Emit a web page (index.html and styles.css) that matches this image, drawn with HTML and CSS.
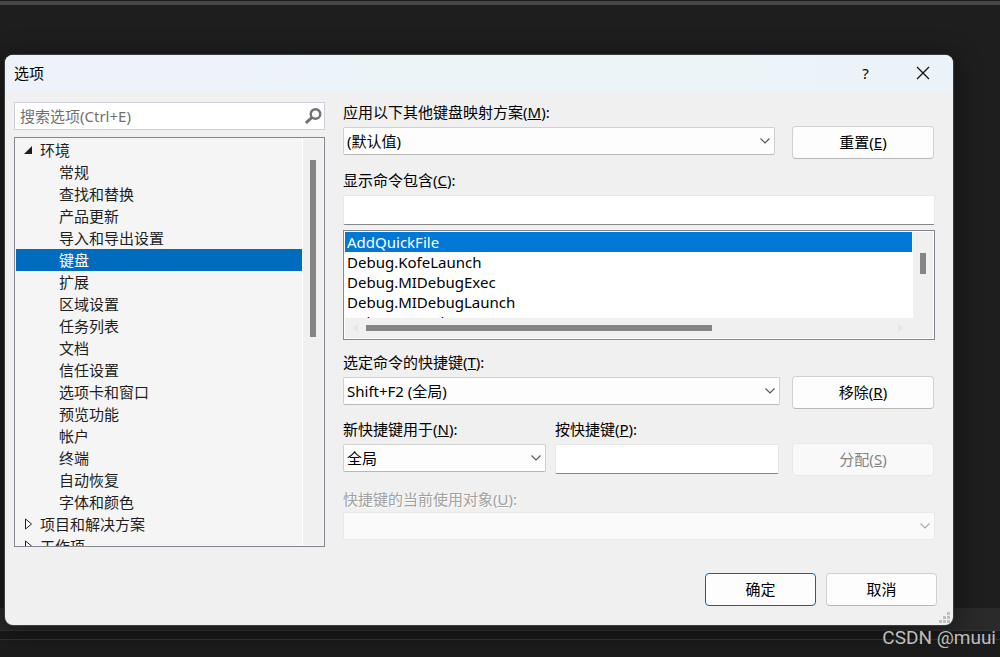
FILE: index.html
```html
<!DOCTYPE html>
<html lang="zh-CN">
<head>
    <meta charset="UTF-8">
    <meta name="viewport" content="width=device-width, initial-scale=1.0">
    <title>选项</title>
    <link rel="stylesheet" href="styles.css">
</head>
<body>
    <div class="dialog" role="dialog" aria-labelledby="dialogTitle">
        <header class="title-bar">
            <h1 id="dialogTitle">选项</h1>
            <button class="title-button" type="button" aria-label="帮助">?</button>
            <button class="title-button" type="button" aria-label="关闭">
                <svg width="14" height="14" viewBox="0 0 14 14"><path d="M1 1L13 13M13 1L1 13" fill="none" stroke="#111" stroke-width="1.3"/></svg>
            </button>
        </header>

        <form class="content">
            <div class="sidebar">
                <div class="search">
                    <input type="text" id="search" placeholder="搜索选项(Ctrl+E)" aria-label="搜索选项">
                    <svg width="18" height="18" viewBox="0 0 18 18"><circle cx="11.5" cy="7" r="4.8" fill="none" stroke="#717171" stroke-width="2.4"/><path d="M8 10.4L1.8 16" stroke="#717171" stroke-width="3"/></svg>
                </div>
                <div class="tree">
                    <ul class="tree-list">
                        <li class="parent"><svg width="10" height="10" viewBox="0 0 10 10"><path d="M9 1V9H1Z" fill="#1e1e1e"/></svg>环境</li>
                        <li>常规</li>
                        <li>查找和替换</li>
                        <li>产品更新</li>
                        <li>导入和导出设置</li>
                        <li class="selected">键盘</li>
                        <li>扩展</li>
                        <li>区域设置</li>
                        <li>任务列表</li>
                        <li>文档</li>
                        <li>信任设置</li>
                        <li>选项卡和窗口</li>
                        <li>预览功能</li>
                        <li>帐户</li>
                        <li>终端</li>
                        <li>自动恢复</li>
                        <li>字体和颜色</li>
                        <li class="parent"><svg width="10" height="12" viewBox="0 0 10 12"><path d="M2.5 1V11L8.5 6Z" fill="#fff" stroke="#1e1e1e"/></svg>项目和解决方案</li>
                        <li class="parent"><svg width="10" height="12" viewBox="0 0 10 12"><path d="M2.5 1V11L8.5 6Z" fill="#fff" stroke="#1e1e1e"/></svg>工作项</li>
                    </ul>
                    <div class="tree-scroll"><span class="thumb"></span></div>
                </div>
            </div>

            <div class="settings">
                <label for="scheme">应用以下其他键盘映射方案(<u>M</u>):</label>
                <div class="row">
                    <div class="dropdown scheme">
                        <select id="scheme"><option>(默认值)</option></select>
                        <svg width="10" height="6" viewBox="0 0 10 6"><path d="M.5 .5L5 5L9.5 .5" fill="none" stroke="#555" stroke-width="1.1"/></svg>
                    </div>
                    <button class="btn" type="button">重置(<u>E</u>)</button>
                </div>

                <label for="filter">显示命令包含(<u>C</u>):</label>
                <input class="text-box" type="text" id="filter">

                <div class="commands">
                    <ul class="command-list">
                        <li class="selected">AddQuickFile</li>
                        <li>Debug.KofeLaunch</li>
                        <li>Debug.MIDebugExec</li>
                        <li>Debug.MIDebugLaunch</li>
                        <li>Debug.Snapshot</li>
                    </ul>
                    <div class="scroll-y"><span class="thumb"></span></div>
                    <div class="scroll-x">
                        <svg width="8" height="10" viewBox="0 0 8 10"><path d="M7 1V9L1 5Z" fill="#e6e6e6"/></svg>
                        <div class="track"><span class="thumb"></span></div>
                        <svg width="8" height="10" viewBox="0 0 8 10"><path d="M1 1V9L7 5Z" fill="#e6e6e6"/></svg>
                    </div>
                </div>

                <label for="shortcut">选定命令的快捷键(<u>T</u>):</label>
                <div class="row">
                    <div class="dropdown">
                        <select id="shortcut"><option>Shift+F2 (全局)</option></select>
                        <svg width="10" height="6" viewBox="0 0 10 6"><path d="M.5 .5L5 5L9.5 .5" fill="none" stroke="#555" stroke-width="1.1"/></svg>
                    </div>
                    <button class="btn" type="button">移除(<u>R</u>)</button>
                </div>

                <div class="row assign">
                    <div class="field scope">
                        <label for="scope">新快捷键用于(<u>N</u>):</label>
                        <div class="dropdown">
                            <select id="scope"><option>全局</option></select>
                            <svg width="10" height="6" viewBox="0 0 10 6"><path d="M.5 .5L5 5L9.5 .5" fill="none" stroke="#555" stroke-width="1.1"/></svg>
                        </div>
                    </div>
                    <div class="field">
                        <label for="press">按快捷键(<u>P</u>):</label>
                        <input class="text-box" type="text" id="press">
                    </div>
                    <button class="btn" type="button" disabled>分配(<u>S</u>)</button>
                </div>

                <label class="disabled" for="usedBy">快捷键的当前使用对象(<u>U</u>):</label>
                <div class="dropdown">
                    <select id="usedBy" disabled><option></option></select>
                    <svg width="10" height="6" viewBox="0 0 10 6"><path d="M.5 .5L5 5L9.5 .5" fill="none" stroke="#aaa" stroke-width="1.1"/></svg>
                </div>
            </div>
        </form>

        <footer class="footer">
            <button class="btn primary" type="button">确定</button>
            <button class="btn" type="button">取消</button>
        </footer>
        <svg class="grip" width="12" height="12" viewBox="0 0 12 12"><path d="M8 0h3v3H8zM4 4h3v3H4zM8 4h3v3H8zM0 8h3v3H0zM4 8h3v3H4zM8 8h3v3H8z" fill="#bfbfbf"/></svg>
    </div>
    <div class="watermark">CSDN @muui</div>
</body>
</html>
```
FILE: styles.css
```css
* {
    box-sizing: border-box;
}
body {
    margin: 0;
    min-height: 100vh;
    padding: 55px 47px 32px 5px;
    position: relative;
    overflow: hidden;
    font: 15px/20px "Noto Sans", "Noto Sans CJK SC", sans-serif;
    color: #000;
    background:
        linear-gradient(#464646, #464646) 0 1px / 100% 4px no-repeat,
        linear-gradient(#2a2a2a 22px, #333 22px, #333 23px, #1a1a1a 23px, #1a1a1a 31px, #333 31px, #333 32px, #1c1c1c 32px) 0 100% / 100% 49px no-repeat,
        #1e1e1e;
}
ul {
    list-style: none;
    margin: 0;
    padding: 0;
}
svg {
    display: block;
    flex: none;
}
input, select, button {
    font: inherit;
    color: inherit;
    margin: 0;
}
.dialog {
    position: relative;
    background: #f0f0f0;
    border-radius: 8px;
    box-shadow: 0 0 0 1px #3c3c3c, 0 4px 24px 4px rgba(0, 0, 0, 0.4);
    overflow: hidden;
}
.title-bar {
    display: flex;
    align-items: center;
    height: 37px;
    padding: 0 2px 2px 9px;
    background: linear-gradient(100deg, #eef3fb 25%, #ebf4f7 40%, #ebf4f7 70%, #ebf3fa);
}
.title-bar h1 {
    flex: 1;
    margin: 0;
    font-size: 15px;
    line-height: 20px;
    font-weight: normal;
}
.title-button {
    display: flex;
    align-items: center;
    justify-content: center;
    width: 57px;
    height: 34px;
    padding: 0;
    border: none;
    background: none;
}
.content {
    display: flex;
    gap: 18px;
    padding: 10px 18px 0 9px;
}
.sidebar {
    flex: 0 0 311px;
}
.search {
    display: flex;
    align-items: center;
    height: 28px;
    padding-right: 2px;
    background: #fff;
    border: 1px solid #ccceDB;
}
.search input {
    flex: 1;
    min-width: 0;
    padding: 0 5px;
    border: none;
    outline: none;
    background: none;
}
.search input::placeholder {
    color: #717171;
}
.tree {
    display: flex;
    height: 410px;
    margin-top: 7px;
    padding: 1px;
    background: #f5f5f5;
    border: 1px solid #828790;
    overflow: hidden;
}
.tree-list {
    flex: 1;
    color: #1e1e1e;
}
.tree-list li {
    display: flex;
    align-items: center;
    height: 22px;
    padding-left: 43px;
}
.tree-list .parent {
    gap: 7px;
    padding-left: 7px;
}
.tree-list .selected {
    background: #006cbe;
    color: #fff;
}
.tree-scroll {
    width: 21px;
    padding: 21px 7px 0;
    background: #f0f0f0;
    border-left: 1px solid #fff;
}
.thumb {
    display: block;
    background: #858585;
}
.tree-scroll .thumb {
    height: 177px;
}
.settings {
    flex: 1;
    min-width: 0;
}
label {
    display: block;
    margin-bottom: 5px;
}
.row {
    display: flex;
    align-items: flex-start;
    gap: 12px;
    margin-bottom: 11px;
    padding-right: 1px;
}
.dropdown {
    position: relative;
    flex: 1;
}
.dropdown.scheme {
    margin-right: 5px;
}
.dropdown select {
    appearance: none;
    display: block;
    width: 100%;
    height: 28px;
    padding: 0 24px 0 3px;
    background: #fdfdfd;
    border: 1px solid #d0d0d0;
    border-bottom-color: #b8b8b8;
    border-radius: 2px;
}
.dropdown select:disabled {
    background: #fafafa;
    border-color: #e8e8e8;
    opacity: 1;
}
.dropdown svg {
    position: absolute;
    right: 5px;
    top: 11px;
}
.btn {
    width: 142px;
    height: 33px;
    padding: 0 0 2px;
    background: #fdfdfd;
    border: 1px solid #d0d0d0;
    border-bottom-color: #b8b8b8;
    border-radius: 4px;
}
.row .btn {
    margin-top: -1px;
}
.btn:disabled {
    color: #838383;
    background: #f9f9f9;
    border-color: #e8e8e8;
}
.text-box {
    display: block;
    width: 100%;
    height: 30px;
    padding: 0 4px;
    background: #fff;
    border: 1px solid #e8e8e8;
    border-bottom-color: #868686;
    border-radius: 2px;
}
.commands {
    display: grid;
    grid-template: 86px 20px / 1fr 20px;
    height: 110px;
    margin: 5px 0 12px;
    padding: 1px;
    background: #fff;
    border: 1px solid #828790;
}
.command-list {
    overflow: hidden;
    padding-right: 1px;
}
.command-list li {
    padding-left: 2px;
}
.command-list .selected {
    background: #0078d7;
    color: #fff;
}
.scroll-y {
    padding: 21px 7px 0;
    background: #f0f0f0;
}
.scroll-y .thumb {
    height: 21px;
}
.scroll-x {
    grid-column: 1 / 3;
    display: flex;
    align-items: center;
    gap: 7px;
    padding: 0 28px 0 6px;
    background: #f0f0f0;
}
.scroll-x .track {
    flex: 1;
}
.scroll-x .thumb {
    width: 66%;
    height: 6px;
}
.assign {
    align-items: flex-end;
    gap: 9px;
    margin: -1px 0 15px;
}
.assign .field {
    flex: 1;
}
.assign .scope {
    flex: 0 0 203px;
}
.assign .dropdown {
    margin-bottom: 2px;
}
.assign .btn {
    margin: 0 0 -2px 4px;
}
.disabled {
    margin-bottom: 3px;
    color: #a0a0a0;
    text-shadow: 1px 1px 0 #fff;
}
.footer {
    display: flex;
    justify-content: flex-end;
    gap: 10px;
    padding: 26px 16px 19px;
}
.footer .btn {
    width: 111px;
}
.footer .primary {
    border-color: #0067c0;
}
.grip {
    position: absolute;
    right: 2px;
    bottom: 1px;
}
.watermark {
    position: absolute;
    right: 4px;
    bottom: 8px;
    font: 19px/22px Roboto, sans-serif;
    color: #bdbdbd;
}
```
